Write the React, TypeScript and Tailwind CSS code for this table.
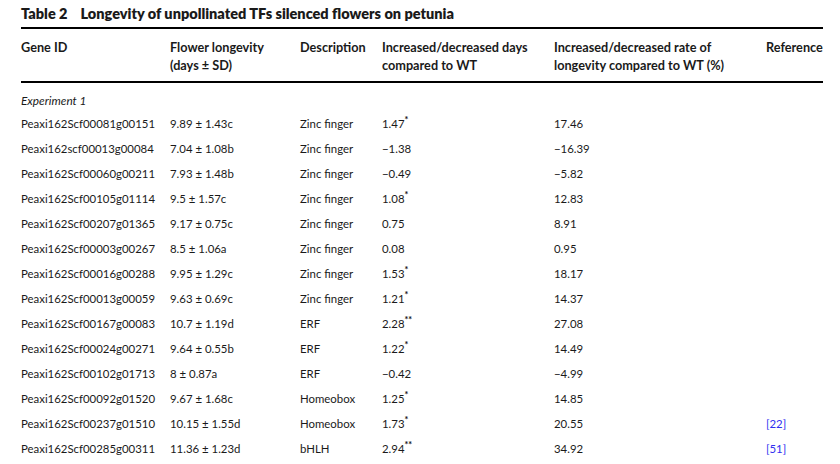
import React from "react";

type Row = { id: string; fl: string; desc: string; days: string; star?: string; rate: string; ref?: string };

const rows: Row[] = [
  { id: "Peaxi162Scf00081g00151", fl: "9.89 ± 1.43c", desc: "Zinc finger", days: "1.47", star: "*", rate: "17.46" },
  { id: "Peaxi162scf00013g00084", fl: "7.04 ± 1.08b", desc: "Zinc finger", days: "−1.38", rate: "−16.39" },
  { id: "Peaxi162Scf00060g00211", fl: "7.93 ± 1.48b", desc: "Zinc finger", days: "−0.49", rate: "−5.82" },
  { id: "Peaxi162Scf00105g01114", fl: "9.5 ± 1.57c", desc: "Zinc finger", days: "1.08", star: "*", rate: "12.83" },
  { id: "Peaxi162Scf00207g01365", fl: "9.17 ± 0.75c", desc: "Zinc finger", days: "0.75", rate: "8.91" },
  { id: "Peaxi162Scf00003g00267", fl: "8.5 ± 1.06a", desc: "Zinc finger", days: "0.08", rate: "0.95" },
  { id: "Peaxi162Scf00016g00288", fl: "9.95 ± 1.29c", desc: "Zinc finger", days: "1.53", star: "*", rate: "18.17" },
  { id: "Peaxi162Scf00013g00059", fl: "9.63 ± 0.69c", desc: "Zinc finger", days: "1.21", star: "*", rate: "14.37" },
  { id: "Peaxi162Scf00167g00083", fl: "10.7 ± 1.19d", desc: "ERF", days: "2.28", star: "**", rate: "27.08" },
  { id: "Peaxi162Scf00024g00271", fl: "9.64 ± 0.55b", desc: "ERF", days: "1.22", star: "*", rate: "14.49" },
  { id: "Peaxi162Scf00102g01713", fl: "8 ± 0.87a", desc: "ERF", days: "−0.42", rate: "−4.99" },
  { id: "Peaxi162Scf00092g01520", fl: "9.67 ± 1.68c", desc: "Homeobox", days: "1.25", star: "*", rate: "14.85" },
  { id: "Peaxi162Scf00237g01510", fl: "10.15 ± 1.55d", desc: "Homeobox", days: "1.73", star: "*", rate: "20.55", ref: "[22]" },
  { id: "Peaxi162Scf00285g00311", fl: "11.36 ± 1.23d", desc: "bHLH", days: "2.94", star: "**", rate: "34.92", ref: "[51]" },
];

const cols = "grid grid-cols-[149px_130px_82px_172px_212px_57px]";

export default function App() {
  return (
    <div
      className="w-[840px] h-[464px] overflow-hidden bg-white pl-[21px] pt-[5px] text-[#1a1a1a]"
      style={{ fontFamily: "Lato, 'Open Sans', sans-serif" }}
    >
      <div className="w-[802px]">
        <div className="flex h-[18px] items-center gap-[13px] text-[14.5px] font-extrabold leading-[18px]">
          <span>Table 2</span>
          <span>Longevity of unpollinated TFs silenced flowers on petunia</span>
        </div>
        <div className="mt-[4px] h-[2px] bg-black" />
        <div className={`${cols} pt-[9px] pb-[7px] text-[12.7px] font-bold leading-[18px] whitespace-nowrap`}>
          <div>Gene ID</div>
          <div>
            Flower longevity
            <br />
            (days ± SD)
          </div>
          <div>Description</div>
          <div>
            Increased/decreased days
            <br />
            compared to WT
          </div>
          <div>
            Increased/decreased rate of
            <br />
            longevity compared to WT (%)
          </div>
          <div>Reference</div>
        </div>
        <div className="h-[1.5px] bg-black" />
        <div className="flex h-[28px] items-end pb-[1px] text-[11.8px] italic leading-[18px]">Experiment 1</div>
        <div className="text-[11.4px] leading-[25px] whitespace-nowrap">
          {rows.map((r) => (
            <div key={r.id} className={`${cols} h-[25px]`}>
              <div>{r.id}</div>
              <div>{r.fl}</div>
              <div>{r.desc}</div>
              <div>
                {r.days}
                {r.star && <sup className="text-[9px] font-black leading-none">{r.star}</sup>}
              </div>
              <div>{r.rate}</div>
              <div className="text-[#3030f0]">{r.ref}</div>
            </div>
          ))}
        </div>
      </div>
    </div>
  );
}
